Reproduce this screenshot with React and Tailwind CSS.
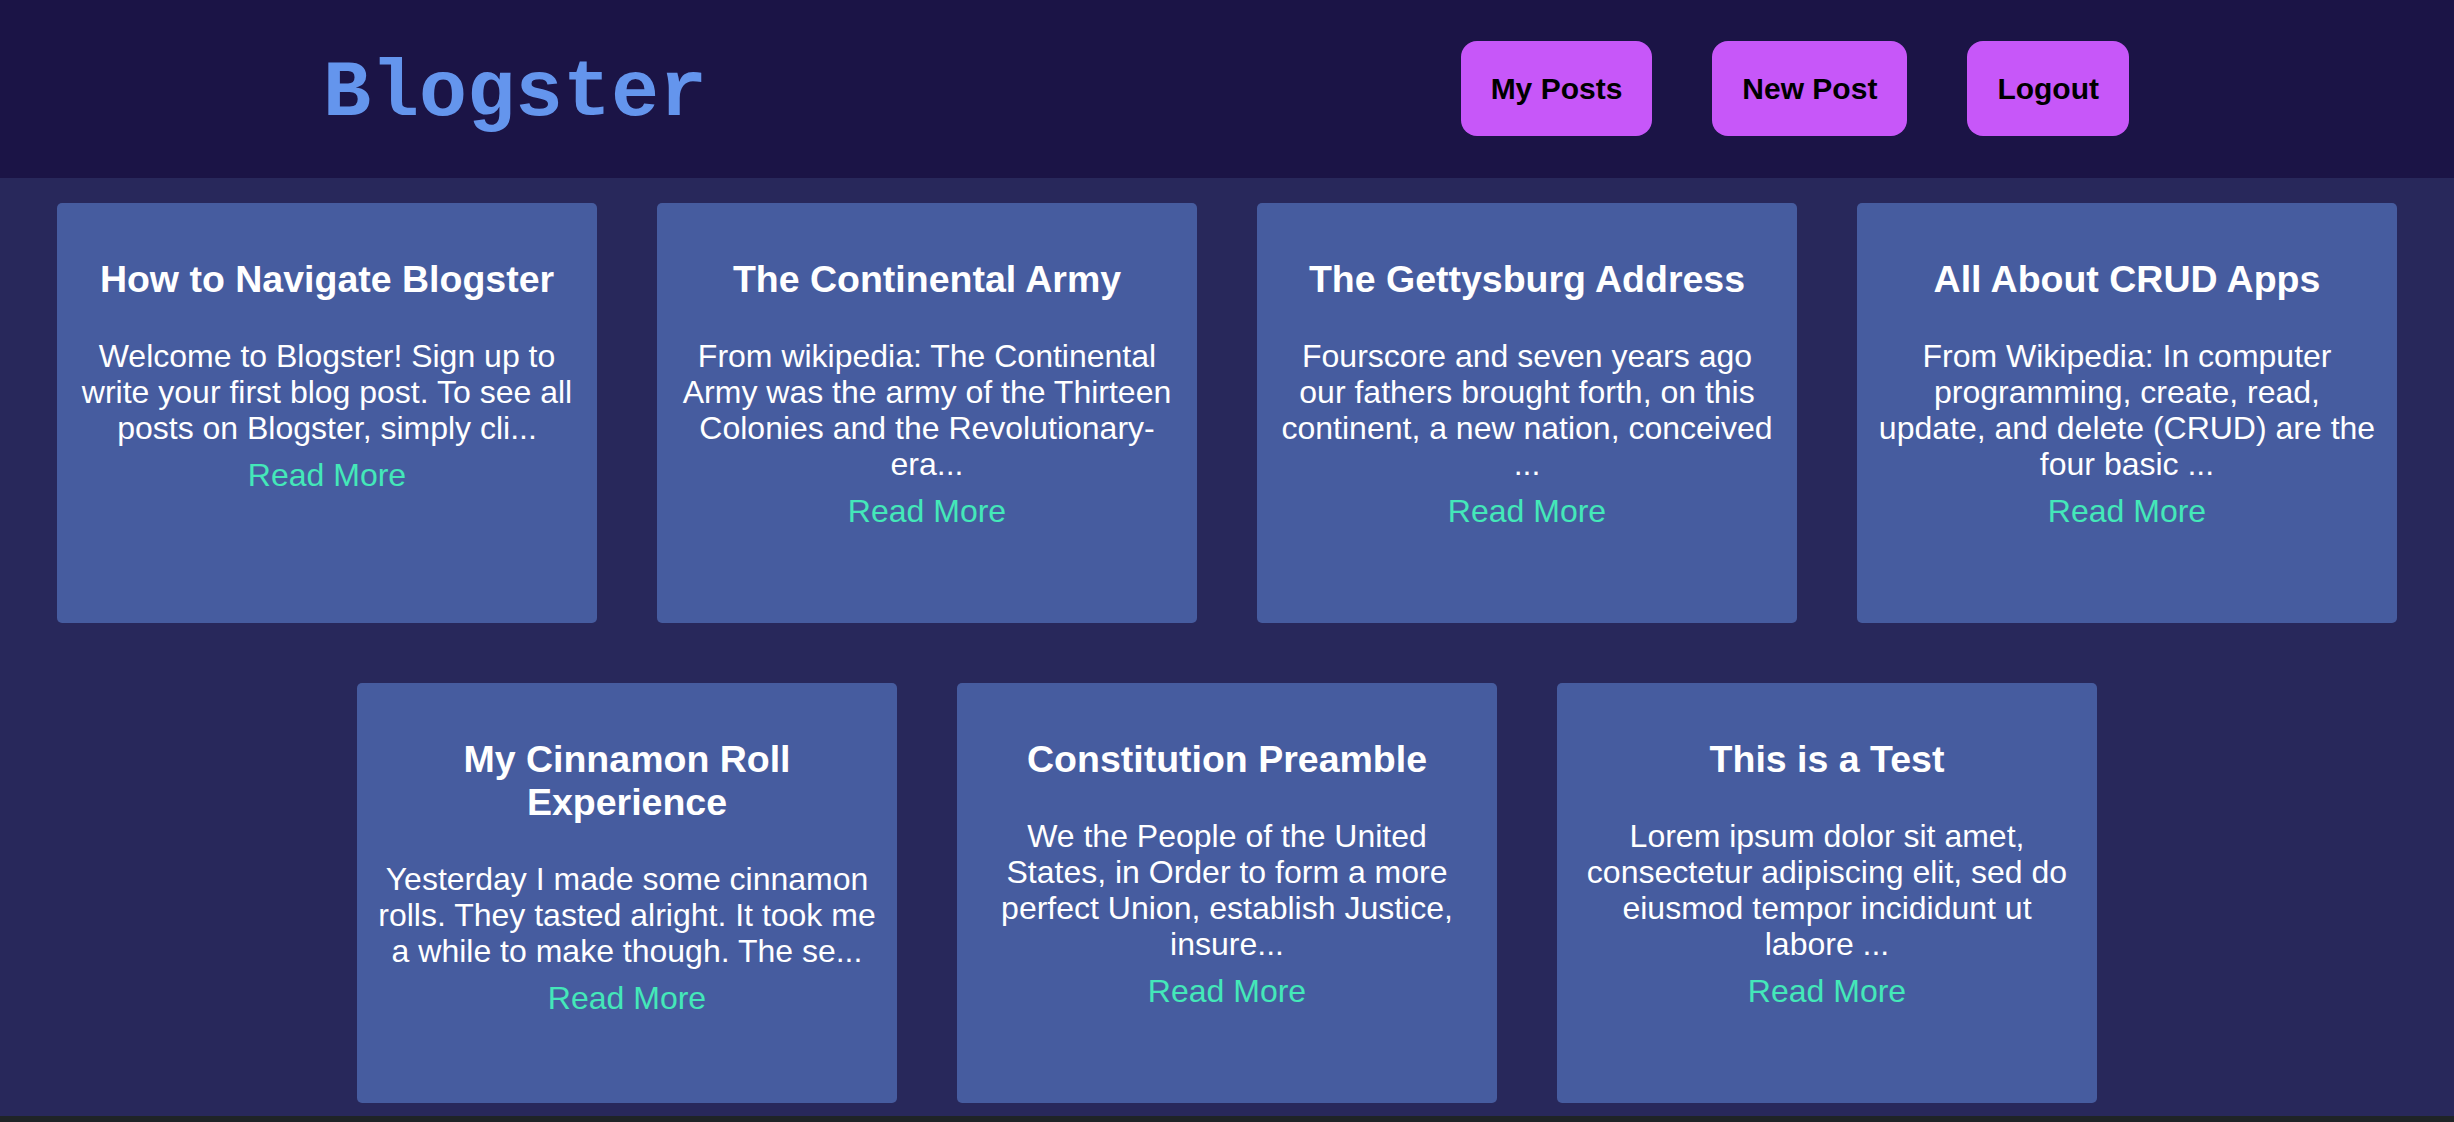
const posts = [
  {
    title: 'How to Navigate Blogster',
    body: 'Welcome to Blogster! Sign up to write your first blog post. To see all posts on Blogster, simply cli...',
  },
  {
    title: 'The Continental Army',
    body: 'From wikipedia: The Continental Army was the army of the Thirteen Colonies and the Revolutionary-era...',
  },
  {
    title: 'The Gettysburg Address',
    body: 'Fourscore and seven years ago our fathers brought forth, on this continent, a new nation, conceived ...',
  },
  {
    title: 'All About CRUD Apps',
    body: 'From Wikipedia: In computer programming, create, read, update, and delete (CRUD) are the four basic ...',
  },
  {
    title: 'My Cinnamon Roll Experience',
    body: 'Yesterday I made some cinnamon rolls. They tasted alright. It took me a while to make though. The se...',
  },
  {
    title: 'Constitution Preamble',
    body: 'We the People of the United States, in Order to form a more perfect Union, establish Justice, insure...',
  },
  {
    title: 'This is a Test',
    body: 'Lorem ipsum dolor sit amet, consectetur adipiscing elit, sed do eiusmod tempor incididunt ut labore ...',
  },
]

const PostCard = ({ post }) => (
  <div className="w-[540px] h-[420px] bg-[#465c9f] rounded-[5px] pt-[55px] px-[20px] text-center text-white">
    <h2 className="text-[37.5px] leading-[43px] font-bold">{post.title}</h2>
    <p className="mt-[37px] text-[32px] leading-[36px]">{post.body}</p>
    <a href="#" className="block mt-[11px] text-[32px] leading-[36px] text-[#44e8b9]">
      Read More
    </a>
  </div>
)

const NavButton = ({ children }) => (
  <button className="h-[95px] px-[30px] rounded-[16px] bg-[#c757f9] text-black text-[30px] font-bold">
    {children}
  </button>
)

export default function App() {
  return (
    <div className="w-full min-h-screen bg-[#1f2427] font-['Liberation_Sans',Arial,sans-serif]">
      <header className="h-[178px] bg-[#1b1446] flex items-center justify-between pl-[323px] pr-[325px]">
        <h1 className="mt-[9px] text-[80px] leading-none font-bold text-[#6495ed] font-['Liberation_Mono','Courier_New',monospace]">
          Blogster
        </h1>
        <nav className="-mt-[1px] flex items-center gap-[60px]">
          <NavButton>My Posts</NavButton>
          <NavButton>New Post</NavButton>
          <NavButton>Logout</NavButton>
        </nav>
      </header>
      <main className="h-[938px] bg-[#28285b] pt-[25px] flex flex-wrap justify-center content-start gap-[60px]">
        {posts.map((post) => (
          <PostCard key={post.title} post={post} />
        ))}
      </main>
    </div>
  )
}
